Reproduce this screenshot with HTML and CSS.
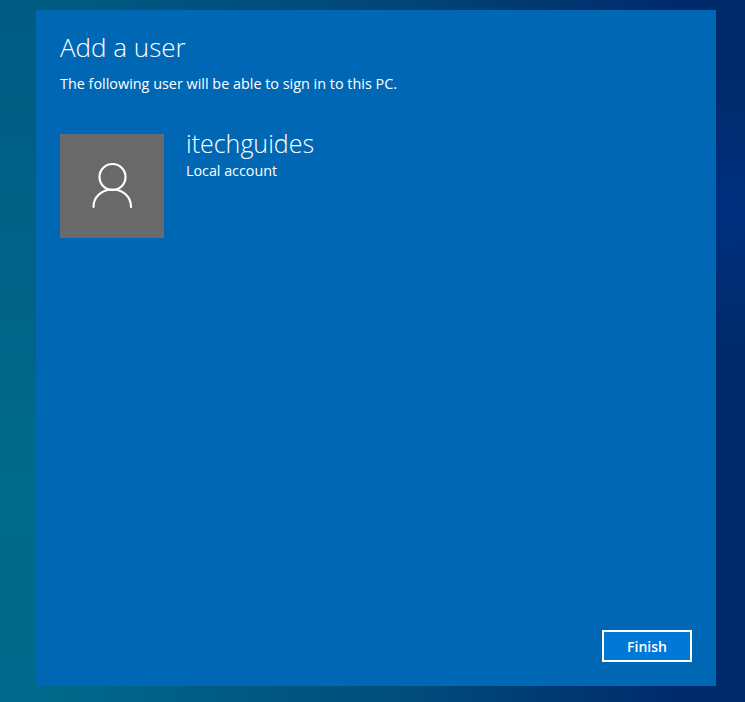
FILE: index.html
```html
<!DOCTYPE html>
<html lang="en">
<head>
<meta charset="utf-8">
<title>Add a user</title>
<link rel="stylesheet" href="styles.css">
</head>
<body>
<main class="panel">
  <header class="head">
    <h1 class="title">Add a user</h1>
    <p class="subtitle">The following user will be able to sign in to this PC.</p>
  </header>
  <section class="user">
    <div class="avatar">
      <svg class="avatar-icon" width="104" height="104" viewBox="0 0 104 104" aria-hidden="true">
        <circle cx="52.5" cy="43" r="13"/>
        <path d="M33.5 73 C33.5 63 41.5 55.5 52.5 55.5 C63.5 55.5 71 63 71 73"/>
      </svg>
    </div>
    <div class="user-info">
      <div class="user-name">itechguides</div>
      <div class="user-type">Local account</div>
    </div>
  </section>
  <footer class="actions">
    <button class="finish" type="button">Finish</button>
  </footer>
</main>
</body>
</html>
```

FILE: styles.css
```css
* { box-sizing: border-box; }

html, body { height: 100%; }

body {
  margin: 0;
  padding: 10px 29px 16px 36px;
  overflow: hidden;
  background:
    radial-gradient(circle 130px at 725px 210px, rgba(0, 50, 145, 0.55) 0%, rgba(0, 50, 145, 0) 100%),
    linear-gradient(90deg, rgba(0, 43, 107, 0) 8%, rgba(0, 43, 107, 0.45) 55%, #002b6b 90%),
    linear-gradient(180deg, #005b82 0%, #006387 40%, #006b8b 70%, #00688a 100%);
  font-family: "Open Sans", "Noto Sans", sans-serif;
  color: #fff;
}

.panel {
  display: flex;
  flex-direction: column;
  width: 680px;
  height: 676px;
  padding: 19px 24px 24px;
  background: #0067b4;
}

.head { display: flex; flex-direction: column; }

.title {
  margin: 0;
  font-size: 26px;
  font-weight: 300;
  line-height: 36px;
}

.subtitle {
  margin: 9px 0 0;
  font-size: 14.4px;
  font-weight: 400;
  line-height: 20px;
}

.user {
  display: flex;
  gap: 22px;
  margin-top: 40px;
}

.avatar {
  width: 104px;
  height: 104px;
  background: #696969;
}

.avatar-icon {
  display: block;
  fill: none;
  stroke: #fff;
  stroke-width: 2.2;
  stroke-linecap: round;
}

.user-name {
  font-size: 25px;
  font-weight: 300;
  line-height: 18px;
}

.user-type {
  margin-top: 9px;
  font-size: 14.3px;
  line-height: 20px;
}

.actions {
  display: flex;
  justify-content: flex-end;
  margin-top: auto;
}

.finish {
  width: 90px;
  height: 32px;
  border: 2px solid #fff;
  background: #0078d7;
  color: #fff;
  font: 600 14px "Open Sans", "Noto Sans", sans-serif;
  padding: 0;
}
```
